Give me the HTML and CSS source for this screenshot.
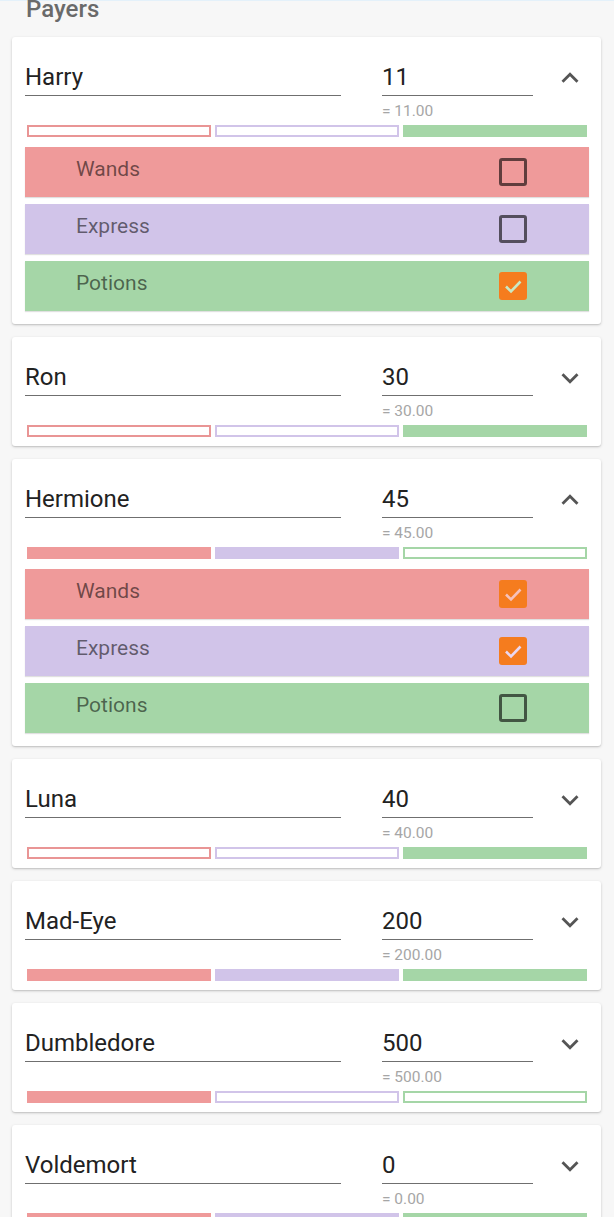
FILE: index.html
```html
<!DOCTYPE html>
<html>
<head>
<meta charset="utf-8">
<link rel="stylesheet" href="styles.css">
</head>
<body>
<div class="topline"></div>
<h1 class="title">Payers</h1>

<div class="card">
  <div class="head">
    <div class="name field">Harry</div>
    <div class="amount"><div class="field">11</div><div class="hint">= 11.00</div></div>
    <div class="toggle"><svg viewBox="0 0 24 24" width="34" height="34"><path d="M7.41 15.41L12 10.83l4.59 4.58L18 14l-6-6-6 6z"/></svg></div>
  </div>
  <div class="bars"><span class="bar red outline"></span><span class="bar purple outline"></span><span class="bar green"></span></div>
  <div class="rows">
    <div class="row red"><span class="label">Wands</span><span class="box"></span></div>
    <div class="row purple"><span class="label">Express</span><span class="box"></span></div>
    <div class="row green"><span class="label">Potions</span><span class="box checked"><svg viewBox="0 0 28 28" width="28" height="28"><polyline points="7,14.5 12,19.5 21.5,9.5"/></svg></span></div>
  </div>
</div>

<div class="card">
  <div class="head">
    <div class="name field">Ron</div>
    <div class="amount"><div class="field">30</div><div class="hint">= 30.00</div></div>
    <div class="toggle"><svg viewBox="0 0 24 24" width="34" height="34"><path d="M16.59 8.59L12 13.17 7.41 8.59 6 10l6 6 6-6z"/></svg></div>
  </div>
  <div class="bars"><span class="bar red outline"></span><span class="bar purple outline"></span><span class="bar green"></span></div>
</div>

<div class="card">
  <div class="head">
    <div class="name field">Hermione</div>
    <div class="amount"><div class="field">45</div><div class="hint">= 45.00</div></div>
    <div class="toggle"><svg viewBox="0 0 24 24" width="34" height="34"><path d="M7.41 15.41L12 10.83l4.59 4.58L18 14l-6-6-6 6z"/></svg></div>
  </div>
  <div class="bars"><span class="bar red"></span><span class="bar purple"></span><span class="bar green outline"></span></div>
  <div class="rows">
    <div class="row red"><span class="label">Wands</span><span class="box checked"><svg viewBox="0 0 28 28" width="28" height="28"><polyline points="7,14.5 12,19.5 21.5,9.5"/></svg></span></div>
    <div class="row purple"><span class="label">Express</span><span class="box checked"><svg viewBox="0 0 28 28" width="28" height="28"><polyline points="7,14.5 12,19.5 21.5,9.5"/></svg></span></div>
    <div class="row green"><span class="label">Potions</span><span class="box"></span></div>
  </div>
</div>

<div class="card">
  <div class="head">
    <div class="name field">Luna</div>
    <div class="amount"><div class="field">40</div><div class="hint">= 40.00</div></div>
    <div class="toggle"><svg viewBox="0 0 24 24" width="34" height="34"><path d="M16.59 8.59L12 13.17 7.41 8.59 6 10l6 6 6-6z"/></svg></div>
  </div>
  <div class="bars"><span class="bar red outline"></span><span class="bar purple outline"></span><span class="bar green"></span></div>
</div>

<div class="card">
  <div class="head">
    <div class="name field">Mad-Eye</div>
    <div class="amount"><div class="field">200</div><div class="hint">= 200.00</div></div>
    <div class="toggle"><svg viewBox="0 0 24 24" width="34" height="34"><path d="M16.59 8.59L12 13.17 7.41 8.59 6 10l6 6 6-6z"/></svg></div>
  </div>
  <div class="bars"><span class="bar red"></span><span class="bar purple"></span><span class="bar green"></span></div>
</div>

<div class="card">
  <div class="head">
    <div class="name field">Dumbledore</div>
    <div class="amount"><div class="field">500</div><div class="hint">= 500.00</div></div>
    <div class="toggle"><svg viewBox="0 0 24 24" width="34" height="34"><path d="M16.59 8.59L12 13.17 7.41 8.59 6 10l6 6 6-6z"/></svg></div>
  </div>
  <div class="bars"><span class="bar red"></span><span class="bar purple outline"></span><span class="bar green outline"></span></div>
</div>

<div class="card">
  <div class="head">
    <div class="name field">Voldemort</div>
    <div class="amount"><div class="field">0</div><div class="hint">= 0.00</div></div>
    <div class="toggle"><svg viewBox="0 0 24 24" width="34" height="34"><path d="M16.59 8.59L12 13.17 7.41 8.59 6 10l6 6 6-6z"/></svg></div>
  </div>
  <div class="bars"><span class="bar red"></span><span class="bar purple"></span><span class="bar green"></span></div>
</div>
</body>
</html>
```
FILE: styles.css
```css
html, body {
  margin: 0;
  padding: 0;
  background: #f7f7f7;
  font-family: Roboto, "Liberation Sans", sans-serif;
}
.topline {
  height: 1px;
  background: #e4f1fa;
}
.title {
  margin: -6px 0 14px 26px;
  font-size: 24px;
  line-height: 28px;
  font-weight: 500;
  color: #6a6a6a;
}
.card {
  background: #fff;
  margin: 0 13px 13px 12px;
  padding: 26px 12px 9px 13px;
  border-radius: 3px;
  box-shadow: 0 1px 3px rgba(0,0,0,0.18), 0 1px 1px rgba(0,0,0,0.08);
}
.head {
  display: flex;
  align-items: flex-start;
}
.field {
  font-size: 24px;
  line-height: 28px;
  color: #222;
  padding-bottom: 4px;
  border-bottom: 1px solid #6f6f6f;
}
.name {
  flex: 0 0 316px;
  margin-right: 41px;
}
.amount {
  flex: 0 0 151px;
}
.hint {
  margin-top: 6px;
  font-size: 15.5px;
  line-height: 18px;
  color: #a6a6a6;
}
.toggle {
  flex: 1;
  display: flex;
  justify-content: center;
  margin-top: -2px;
}
.toggle svg {
  fill: #555;
  margin-left: 18px;
}
.bars {
  display: grid;
  grid-template-columns: 1fr 1fr 1fr;
  gap: 4px;
  margin: 5px 2px 0 2px;
}
.bar {
  height: 12px;
  box-sizing: border-box;
}
.bar.red { background: #ef9a9a; }
.bar.purple { background: #d1c4e9; }
.bar.green { background: #a5d6a7; }
.bar.outline { background: #fff; border: 2px solid; }
.bar.red.outline { border-color: #e99595; }
.bar.purple.outline { border-color: #d1c4e9; }
.bar.green.outline { border-color: #a5d6a7; }
.rows {
  display: flex;
  flex-direction: column;
  gap: 7px;
  margin: 10px 0 4px 0;
}
.row {
  height: 50px;
  display: flex;
  align-items: center;
  justify-content: space-between;
  padding: 0 62px 0 51px;
  box-shadow: 0 1px 1px rgba(0,0,0,0.12);
}
.row.red { background: #ef9a9a; color: #f6c1bb; }
.row.purple { background: #d1c4e9; color: #ead7f0; }
.row.green { background: #a5d6a7; color: #c9e8c4; }
.label {
  font-size: 21px;
  line-height: 24px;
  padding-bottom: 7px;
  color: rgba(0,0,0,0.55);
}
.box {
  width: 28px;
  height: 28px;
  box-sizing: border-box;
  border: 3px solid rgba(0,0,0,0.6);
  border-radius: 3px;
  display: flex;
}
.box.checked {
  border: none;
  background: #f57c1e;
}
.box svg polyline {
  fill: none;
  stroke: currentColor;
  stroke-width: 2.6;
}
```
